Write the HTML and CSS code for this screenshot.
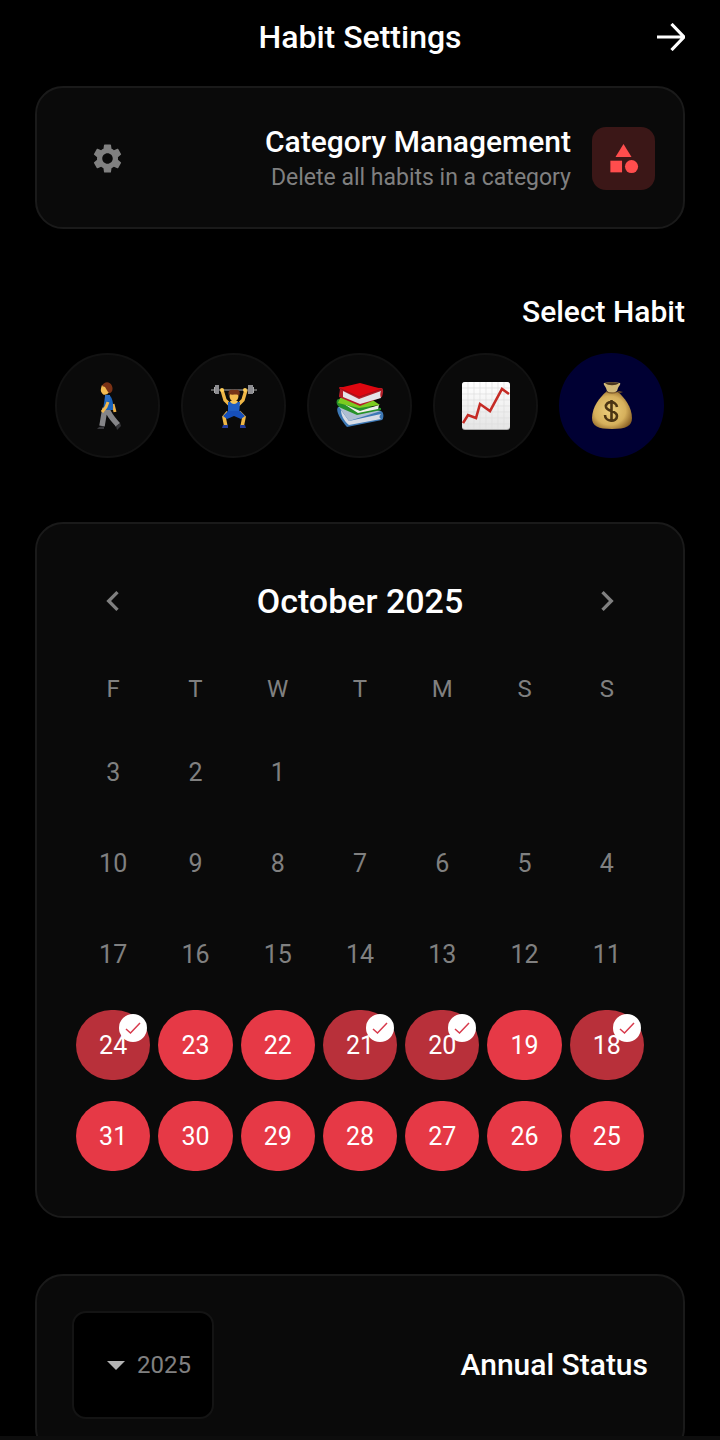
FILE: index.html
```html
<!DOCTYPE html>
<html lang="en" dir="rtl">
<head>
<meta charset="utf-8">
<meta name="viewport" content="width=device-width, initial-scale=1">
<title>Habit Settings</title>
<link rel="stylesheet" href="styles.css">
</head>
<body>
<div class="app">
  <header class="topbar">
    <a class="back" href="#" aria-label="Back"><svg viewBox="0 0 28 28"><path d="M0 14H26M14.500 1L27 14L14.500 27" fill="none" stroke="currentColor" stroke-width="3.200"/></svg></a>
    <h1 class="title">Habit Settings</h1>
  </header>

  <main class="content">
    <section class="card category">
      <span class="category-tile"><svg viewBox="0 0 24 24" fill="currentColor"><path d="M12 2L6.500 11H17.500Z"/><circle cx="17.500" cy="17.500" r="4.500"/><path d="M3 13.500H11V21.500H3Z"/></svg></span>
      <div class="category-text">
        <h2 class="heading">Category Management</h2>
        <p class="hint">Delete all habits in a category</p>
      </div>
      <button class="gear" type="button" aria-label="Manage categories"><svg viewBox="0 0 24 24" fill="currentColor"><path d="M19.140 12.940c.04-.3.06-.61.06-.94 0-.32-.02-.64-.07-.94l2.030-1.580c.18-.14.23-.41.12-.61l-1.920-3.320c-.12-.22-.37-.29-.59-.22l-2.390.96c-.5-.38-1.030-.7-1.620-.94l-.36-2.540c-.04-.24-.24-.41-.48-.41h-3.840c-.24 0-.43.17-.47.41l-.36 2.540c-.59.24-1.130.57-1.620.94l-2.390-.96c-.22-.08-.47 0-.59.22L2.740 8.870c-.12.21-.08.47.12.61l2.030 1.580c-.05.3-.09.63-.09.94s.02.64.07.94l-2.030 1.580c-.18.14-.23.41-.12.61l1.920 3.320c.12.22.37.29.59.22l2.390-.96c.5.38 1.030.7 1.620.94l.36 2.540c.05.24.24.41.48.41h3.840c.24 0 .44-.17.47-.41l.36-2.540c.59-.24 1.130-.56 1.620-.94l2.390.96c.22.08.47 0 .59-.22l1.920-3.320c.12-.22.07-.47-.12-.61l-2.010-1.580zM12 15.600c-1.980 0-3.600-1.620-3.600-3.600s1.620-3.600 3.600-3.600 3.600 1.620 3.600 3.600-1.620 3.600-3.600 3.600z"/></svg></button>
    </section>

    <section class="habits">
      <h2 class="heading">Select Habit</h2>
      <div class="habit-list">
        <button class="habit selected" type="button" aria-label="Savings">
          <svg viewBox="0 0 48 48">
            <defs><radialGradient id="bag" cx=".45" cy=".5" r=".6"><stop offset="0" stop-color="#edcf7c"/><stop offset=".65" stop-color="#d6b05c"/><stop offset="1" stop-color="#8d6326"/></radialGradient></defs>
            <path d="M18 10C12 15 4 25 4 36c0 8 6 11 20 11s20-3 20-11C44 25 36 15 30 10Z" fill="url(#bag)"/>
            <path d="M16 1c4-1 12-1 16 0 1 1-1 3-2 5l-1 3c-3 2-8 2-10 0l-1-3c-1-2-3-4-2-5Z" fill="#d2b978"/>
            <path d="M17 1c4-1 10-1 14 0-3 3-11 3-14 0Z" fill="#49351d"/>
            <path d="M18 9c4 2 8 2 13 0l4 1-3 1-2-1c-4 2-8 2-12 0Z" fill="#705027"/>
            <path d="M29 25c-1-7-12-6-11 0 1 5 11 3 11 9 0 7-12 6-12-1M23.500 18v22" fill="none" stroke="#4c3513" stroke-width="2.600"/>
          </svg>
        </button>
        <button class="habit" type="button" aria-label="Investing">
          <svg viewBox="0 0 48 48">
            <defs><linearGradient id="paper" x2="0" y2="1"><stop offset="0" stop-color="#fff"/><stop offset="1" stop-color="#e5e5e5"/></linearGradient></defs>
            <rect width="48" height="48" rx="3" fill="#aaa"/><rect width="48" height="47" rx="3" fill="url(#paper)"/>
            <path d="M6 0V47M12 0V47M18 0V47M24 0V47M30 0V47M36 0V47M42 0V47M0 6H48M0 12H48M0 18H48M0 24H48M0 30H48M0 36H48M0 42H48" stroke="#dedede" stroke-width=".7"/>
            <path d="M1 41L6 33L14 36L18 22L28 29L40 7L47 12" fill="none" stroke="#c52b25" stroke-width="2.600"/>
          </svg>
        </button>
        <button class="habit" type="button" aria-label="Reading">
          <svg viewBox="0 0 48 48">
            <path d="M2 25C-1 29 5 38 11 45L46 38c2-2 2-8-1-9L16 24Z" fill="#3d78b5"/>
            <path d="M5 28L13 39L45 32c-2 2-2 4 0 5L13 43C8 39 5 33 5 28Z" fill="#d7dce6"/>
            <path d="M3 25L16 25L45 29L13 39Z" fill="#aebed2"/>
            <path d="M2 17C-1 20 1 24 5 26L21 33L45 28v-2L25 23Z" fill="#269229"/>
            <path d="M8 22L24 29L43 23L42 27L22 31Z" fill="#efefea"/>
            <path d="M4 16L32 15L44 23L23 26L2 21Z" fill="#7ccc20"/>
            <path d="M3 5C5 7 3 11 3 15L24 24L46 15c1-3 2-7 0-9Z" fill="#b51f28"/>
            <path d="M7 9L23 17L45 9c-1 2-1 5 0 7L24 22L7 15Z" fill="#e5e4e8"/>
            <path d="M3 6L24 1L46 7L23 15Z" fill="#df0710"/>
            <path d="M3 6L23 15L46 7" fill="none" stroke="#a80d17"/>
          </svg>
        </button>
        <button class="habit" type="button" aria-label="Weight training">
          <svg viewBox="0 0 48 48">
            <path d="M1 8H47" stroke="#777" stroke-width="1.500"/>
            <path d="M4 5H9V11H4ZM39 5H44V11H39Z" fill="#aaa"/><path d="M5 3H9V12H5ZM38 3H43V12H38Z" fill="#8d8d91"/>
            <path d="M12 8L15 18L20 23M36 8L33 18L28 23" stroke="#efb747" stroke-width="3.400" fill="none"/>
            <circle cx="12" cy="8" r="2" fill="#ffce58"/><circle cx="35" cy="8" r="2" fill="#ffce58"/>
            <path d="M18 20H30L29 33H18Z" fill="#1d5cc1"/><path d="M20 19C21 23 27 23 28 19Z" fill="#f7c857"/>
            <ellipse cx="24" cy="14" rx="4.500" ry="5.500" fill="#f4bd50"/><path d="M19 14C17 8 21 7 25 8c4-1 6 2 4 6-2-3-6 0-10-2Z" fill="#773418"/>
            <path d="M18 30L14 35L16 45M29 30L34 35L32 45" stroke="#efb747" stroke-width="3.600" fill="none"/>
            <path d="M18 29H30L35 34L31 37L24 34L17 37L13 34Z" fill="#164fba"/>
            <path d="M13 43H18V46H12ZM30 43H35L36 46H30Z" fill="#243c98"/>
          </svg>
        </button>
        <button class="habit" type="button" aria-label="Walking">
          <svg viewBox="0 0 48 48">
            <path d="M21 26L18 44M23 27C26 35 31 39 34 43" stroke="#858588" stroke-width="5.500" fill="none"/>
            <path d="M15 45L20 44V47H13ZM32 44L36 41L37 44L33 48Z" fill="#36363a"/>
            <path d="M29 22L31 30" stroke="#edb24a" stroke-width="3"/>
            <path d="M21 14C25 10 30 16 29 28H19Z" fill="#1962ba"/>
            <path d="M24 20L22 25L18 30" stroke="#f1ba51" stroke-width="3" fill="none"/>
            <path d="M21 13H26V19H21Z" fill="#286bc1"/>
            <path d="M18 3C17 6 16 9 18 11C19 14 24 13 26 9L25 3Z" fill="#f3bb51"/>
            <path d="M18 4C20-1 26-1 28 4C30 9 26 13 24 10L21 5Z" fill="#7b3215"/>
          </svg>
        </button>
      </div>
    </section>

    <section class="card calendar">
      <div class="month-bar">
        <button class="month-step" type="button" aria-label="Previous month"><svg viewBox="0 0 24 24" fill="currentColor"><path d="M8.590 16.590L13.170 12L8.590 7.410L10 6L16 12L10 18Z"/></svg></button>
        <h2 class="month">October 2025</h2>
        <button class="month-step" type="button" aria-label="Next month"><svg viewBox="0 0 24 24" fill="currentColor"><path d="M15.410 7.410L14 6L8 12L14 18L15.410 16.590L10.830 12Z"/></svg></button>
      </div>
      <table class="days">
        <thead><tr><th>S</th><th>S</th><th>M</th><th>T</th><th>W</th><th>T</th><th>F</th></tr></thead>
        <tbody>
          <tr><td></td><td></td><td></td><td></td><td><button class="day" type="button">1</button></td><td><button class="day" type="button">2</button></td><td><button class="day" type="button">3</button></td></tr>
          <tr><td><button class="day" type="button">4</button></td><td><button class="day" type="button">5</button></td><td><button class="day" type="button">6</button></td><td><button class="day" type="button">7</button></td><td><button class="day" type="button">8</button></td><td><button class="day" type="button">9</button></td><td><button class="day" type="button">10</button></td></tr>
          <tr><td><button class="day" type="button">11</button></td><td><button class="day" type="button">12</button></td><td><button class="day" type="button">13</button></td><td><button class="day" type="button">14</button></td><td><button class="day" type="button">15</button></td><td><button class="day" type="button">16</button></td><td><button class="day" type="button">17</button></td></tr>
          <tr>
            <td><button class="day active done" type="button">18<span class="badge"><svg viewBox="0 0 28 28"><path d="M7 15L11.500 19L21 9"/></svg></span></button></td>
            <td><button class="day active" type="button">19</button></td>
            <td><button class="day active done" type="button">20<span class="badge"><svg viewBox="0 0 28 28"><path d="M7 15L11.500 19L21 9"/></svg></span></button></td>
            <td><button class="day active done" type="button">21<span class="badge"><svg viewBox="0 0 28 28"><path d="M7 15L11.500 19L21 9"/></svg></span></button></td>
            <td><button class="day active" type="button">22</button></td>
            <td><button class="day active" type="button">23</button></td>
            <td><button class="day active done" type="button">24<span class="badge"><svg viewBox="0 0 28 28"><path d="M7 15L11.500 19L21 9"/></svg></span></button></td>
          </tr>
          <tr><td><button class="day active" type="button">25</button></td><td><button class="day active" type="button">26</button></td><td><button class="day active" type="button">27</button></td><td><button class="day active" type="button">28</button></td><td><button class="day active" type="button">29</button></td><td><button class="day active" type="button">30</button></td><td><button class="day active" type="button">31</button></td></tr>
        </tbody>
      </table>
    </section>

    <section class="card annual">
      <h2 class="heading"><label for="year">Annual Status</label></h2>
      <div class="year-box">
        <select class="year" id="year"><option>2025</option></select>
        <svg class="caret" viewBox="0 0 18 9" fill="currentColor"><path d="M0 0H18L9 9Z"/></svg>
      </div>
    </section>
  </main>
  <footer class="bottom-edge"></footer>
</div>
</body>
</html>
```

FILE: styles.css
```css
* { box-sizing: border-box; }

body {
  margin: 0;
  background: #000;
  color: #fff;
  font-family: Roboto, "Liberation Sans", sans-serif;
}

h1, h2, p { margin: 0; font-weight: 500; }

button {
  padding: 0;
  border: 0;
  background: none;
  color: inherit;
  font: inherit;
  cursor: pointer;
}

svg { display: block; }

.app {
  display: flex;
  flex-direction: column;
  height: 100vh;
}

.topbar {
  display: grid;
  grid-template-columns: 28px 1fr 28px;
  align-items: center;
  padding: 17px 35px 0;
}

.back { color: #fff; }
.back svg { width: 28px; height: 28px; }

.title {
  font-size: 32px;
  line-height: 40px;
  text-align: center;
}

.content {
  flex: 1;
  min-height: 0;
  overflow-y: auto;
  scrollbar-width: none;
  padding: 29px 35px;
}

.card {
  border: 2px solid #1a1a1a;
  border-radius: 28px;
  background: #0a0a0a;
}

.heading {
  font-size: 30px;
  line-height: 36px;
}

.category {
  display: flex;
  align-items: center;
  gap: 21px;
  padding: 36px 28px 35px;
}

.category-tile {
  display: grid;
  place-items: center;
  width: 63px;
  height: 63px;
  border-radius: 14px;
  background: #3b1717;
  color: #ff4d4d;
}

.category-tile svg, .gear svg { width: 35px; height: 35px; }

.category-text { flex: 1; }

.hint {
  margin-top: 4px;
  color: #808080;
  font-size: 23px;
  font-weight: 400;
  line-height: 28px;
}

.gear {
  display: grid;
  place-items: center;
  width: 84px;
  height: 63px;
  color: #808080;
}

.habits { padding-top: 65px; }

.habit-list {
  display: flex;
  gap: 21px;
  padding: 23px 21px 64px;
}

.habit {
  display: grid;
  place-items: center;
  flex: none;
  width: 105px;
  height: 105px;
  border: 2px solid #121212;
  border-radius: 50%;
  background: #0a0a0a;
}

.habit.selected {
  border-color: #000033;
  background: #000033;
}

.habit svg { width: 48px; height: 48px; }

.calendar { padding: 28px 35px 34px; }

.month-bar {
  display: grid;
  grid-template-columns: 1fr 5fr 1fr;
  align-items: center;
  height: 98px;
}

.month {
  font-size: 34px;
  line-height: 40px;
  text-align: center;
}

.month-step {
  display: grid;
  place-items: center;
  height: 70px;
  color: #808080;
}

.month-step svg { width: 40px; height: 40px; }

.days {
  width: 100%;
  border-collapse: collapse;
  table-layout: fixed;
  color: #808080;
  font-size: 25px;
  line-height: 30px;
}

.days th {
  height: 77px;
  padding: 0;
  font-size: 24px;
  font-weight: 400;
}

.days td { padding: 10px 4px 11px; }

.day {
  display: block;
  position: relative;
  width: 100%;
  height: 70px;
  padding-top: 2px;
  border-radius: 35px;
}

.day.active {
  background: #e63946;
  color: #fff;
}

.day.done { background: #b8303a; }

.badge {
  position: absolute;
  top: 4px;
  right: 3px;
  width: 28px;
  height: 28px;
  border-radius: 50%;
  background: #fff;
}

.badge path {
  fill: none;
  stroke: #d83a4c;
  stroke-width: 1.5;
}

.annual {
  display: flex;
  align-items: center;
  justify-content: space-between;
  margin-top: 56px;
  padding: 35px;
}

.year-box {
  display: grid;
  align-items: center;
}

.year, .caret { grid-area: 1 / 1; }

.year {
  appearance: none;
  width: 142px;
  height: 108px;
  padding: 0 21px;
  border: 2px solid #141414;
  border-radius: 14px;
  background: #000;
  color: #808080;
  font: 400 24px/30px Roboto, sans-serif;
}

.caret {
  justify-self: end;
  width: 18px;
  height: 9px;
  margin-left: 35px;
  color: #b3b3b3;
  pointer-events: none;
}

.bottom-edge {
  height: 4px;
  background: #0d0d0d;
}
```
